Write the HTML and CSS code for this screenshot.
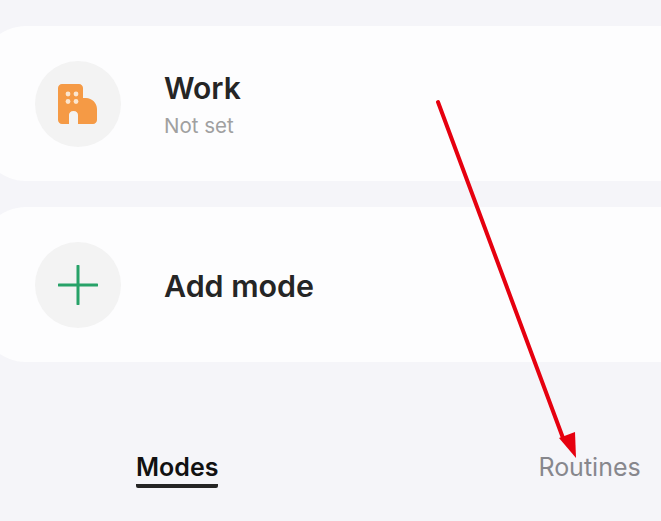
FILE: index.html
```html
<!DOCTYPE html>
<html lang="en">
<head>
<meta charset="utf-8">
<title>Modes</title>
<link rel="stylesheet" href="styles.css">
</head>
<body>
<main class="screen">
  <section class="card">
    <span class="badge">
      <svg class="icon" viewBox="0 0 40 40" width="40" height="40" aria-hidden="true">
        <path fill="#f59a45" d="M0 4C0 1.800 1.800 0 4 0H21C23.200 0 25 1.800 25 4V14H28C34 14 39 19 39 25V36C39 38.200 37.200 40 35 40H20V31C20 28.800 18.500 27 15.500 27C12.500 27 11 28.800 11 31V40H4C1.800 40 0 38.200 0 36Z"/>
        <g fill="#fbe6d0">
          <circle cx="10" cy="10" r="2.400"/><circle cx="18" cy="10" r="2.400"/>
          <circle cx="10" cy="17.500" r="2.400"/><circle cx="18" cy="17.500" r="2.400"/>
        </g>
      </svg>
    </span>
    <div class="label">
      <h2 class="title">Work</h2>
      <p class="sub">Not set</p>
    </div>
  </section>
  <section class="card">
    <span class="badge">
      <svg class="icon" viewBox="0 0 40 40" width="40" height="40" aria-hidden="true">
        <path d="M20 1v38M1 20h38" fill="none" stroke="#27a268" stroke-width="3" stroke-linecap="round"/>
      </svg>
    </span>
    <div class="label label-add">
      <h2 class="title">Add mode</h2>
    </div>
  </section>
  <nav class="tabs">
    <span class="tab tab-active">Modes</span>
    <span class="tab">Routines</span>
  </nav>
</main>
<svg class="arrow" viewBox="0 0 661 521" width="661" height="521" aria-hidden="true">
  <path d="M438 102 L563 438" fill="none" stroke="#e6000f" stroke-width="4" stroke-linecap="round"/>
  <path d="M559 438 L575 432 L576 458 Z" fill="#e6000f"/>
</svg>
</body>
</html>
```

FILE: styles.css
```css
html, body {
  margin: 0;
  height: 100%;
  overflow: hidden;
  background: #f5f5f9;
}
body {
  font-family: Inter, "Noto Sans", sans-serif;
  color: #252525;
}
.screen {
  display: flex;
  flex-direction: column;
  gap: 26px;
  height: 100%;
  box-sizing: border-box;
  padding-top: 26px;
  overflow: hidden;
}
.card {
  display: flex;
  align-items: center;
  gap: 43px;
  height: 155px;
  margin: 0 -60px 0 -20px;
  padding-left: 55px;
  border-radius: 46px;
  background: #fdfdfe;
}
.badge {
  display: flex;
  align-items: center;
  justify-content: center;
  flex: none;
  width: 86px;
  height: 86px;
  border-radius: 50%;
  background: #f3f3f3;
}
.label {
  padding-top: 2px;
}
.title {
  margin: 0;
  font-size: 30px;
  font-weight: 600;
  line-height: 36px;
}
.label-add .title {
  font-size: 30.400px;
}
.sub {
  margin: 7px 0 0;
  font-size: 20.500px;
  line-height: 26px;
  color: #a0a0a0;
}
.tabs {
  display: flex;
  margin-top: 22px;
  padding-top: 40px;
  padding-left: 136px;
  gap: 320px;
}
.tab {
  font-size: 25px;
  line-height: 34px;
  color: #87878d;
}
.tab-active {
  font-weight: 600;
  color: #111;
  border-bottom: 4px solid #252525;
  border-radius: 0 0 2px 2px;
}
.arrow {
  position: absolute;
  left: 0;
  top: 0;
  pointer-events: none;
}
```
